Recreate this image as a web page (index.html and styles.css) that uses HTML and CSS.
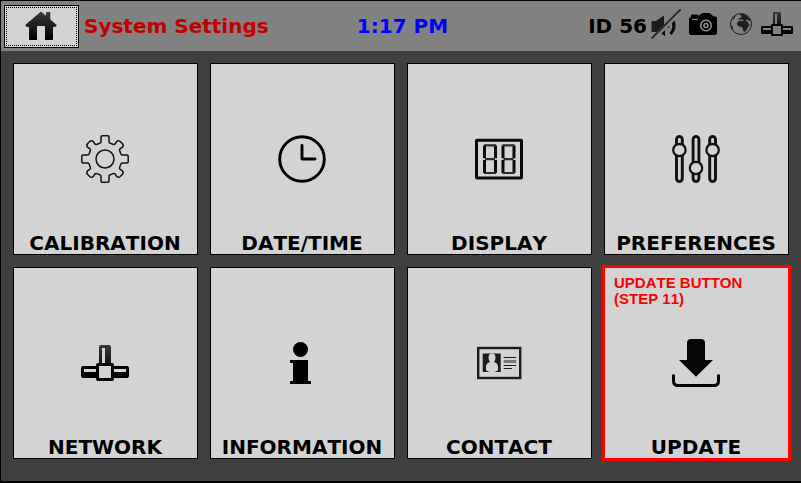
FILE: index.html
```html
<!DOCTYPE html>
<html lang="en">
<head>
    <meta charset="UTF-8">
    <meta name="viewport" content="width=device-width, initial-scale=1.0">
    <title>System Settings</title>
    <link rel="stylesheet" href="styles.css">
</head>
<body>
    <header class="topbar">
        <div class="topbar-left">
            <button type="button" class="home-button" aria-label="Home">
                <svg width="32" height="30" viewBox="0 0 32 30">
                    <defs>
                        <linearGradient id="home-fill" x1="0" y1="0" x2="0" y2="1">
                            <stop offset="0" stop-color="#3a3a3a"/>
                            <stop offset="1" stop-color="#000"/>
                        </linearGradient>
                    </defs>
                    <path fill="url(#home-fill)" d="M16 0.5L21 4.8V2Q21 1 22 1H24.3Q25.3 1 25.3 2V8.5L31.5 13.8Q32 14.5 31 15.2L30 16Q29.3 16.3 28 15.7V28Q28 29 27 29H20V15.5Q20 15 19.5 15H12.5Q12 15 12 15.5V29H5Q4 29 4 28V15.7Q2.7 16.3 2 16L1 15.2Q0 14.5 0.5 13.8Z"/>
                </svg>
            </button>
            <h1 class="page-title">System Settings</h1>
        </div>
        <time class="clock">1:17 PM</time>
        <div class="status">
            <span class="device-id">ID 56</span>
            <div class="status-icons">
                <svg width="30" height="30" viewBox="0 0 30 30">
                    <path fill="#1c1c1c" d="M0.5 12.5Q0.5 12 1 12H5L13 6.5V16L5.5 23H1Q0.5 23 0.5 22.5Z"/>
                    <path fill="#050505" d="M9 23.5L14 18.5V27Z"/>
                    <path fill="none" stroke="#1c1c1c" stroke-width="2" d="M17 19Q18 17 17.5 15"/>
                    <path fill="none" stroke="#0c0c0c" stroke-width="3.2" d="M19.5 25Q25 19 21.8 11.5"/>
                    <path stroke="#818181" stroke-width="3" d="M2 31L31 2"/>
                    <path stroke="#222" stroke-width="1.8" d="M0.5 29.5L29.5 0.5"/>
                </svg>
                <svg class="camera" width="28" height="22" viewBox="0 0 28 22">
                    <path fill="#000" d="M2 4V2.5Q2 1.5 3 1.5H8.5Q9.5 1.5 9.5 2.5V3L12 1Q13 0 14 0H20Q21 0 22 1L24.5 3.5H26Q28 3.5 28 5.5V20Q28 22 26 22H2Q0 22 0 20V6Q0 4.5 2 4Z"/>
                    <circle cx="17" cy="12.5" r="5.3" fill="none" stroke="#909090" stroke-width="1.5"/>
                    <circle cx="17" cy="12.5" r="2" fill="none" stroke="#909090" stroke-width="1.5"/>
                    <path stroke="#818181" stroke-width="1.3" d="M3 6.5H9"/>
                </svg>
                <svg width="24" height="24" viewBox="0 0 24 24">
                    <circle cx="12" cy="12" r="10.5" fill="none" stroke="#1c1c1c" stroke-width="1"/>
                    <path fill="#1c1c1c" d="M11 2.5L14 1.8L18 4L21.5 8L20.5 9L18.5 7.5L16.5 8.5L19 10L19.5 12.5H21L18.5 16L17.5 18L15.5 20L14 18.5L13.5 15.5L11 14.5L9 14L8 12L9 9.5L11.5 8.7L14 9.2L14.5 8L12.5 7.2L10.5 8L9.5 7L12 5.5L13 3.5L11.5 4Z"/>
                    <path fill="#1c1c1c" d="M3 7L6 3.5L6.5 4.5L4 7.5ZM1.8 13L3.5 14L4 16.5L3 17Z"/>
                </svg>
                <svg width="32" height="32" viewBox="0 0 48 48">
                    <use href="#network-shape"/>
                </svg>
            </div>
        </div>
    </header>

    <main class="tiles">
        <button type="button" class="tile">
            <svg class="tile-icon" viewBox="0 0 48 48" fill="none" stroke="#111" stroke-width="1.5">
                <defs>
                    <path id="gear-quarter" d="M24 0.8H26.8Q28 0.8 28 2V6.5Q28 8 29.3 8.3Q31 8.7 32 9.3Q33.3 10 34.3 8.8L35.5 6.8Q37.3 5 39.3 6.5L41.5 8.7Q43 10.7 41.2 12.5L39.2 13.7Q38 14.7 38.7 16Q39.3 17 39.7 18.7Q40 20 41.5 20H46Q47.2 20 47.2 21.2V24"/>
                </defs>
                <use href="#gear-quarter"/>
                <use href="#gear-quarter" transform="rotate(90 24 24)"/>
                <use href="#gear-quarter" transform="rotate(180 24 24)"/>
                <use href="#gear-quarter" transform="rotate(270 24 24)"/>
                <circle cx="24" cy="24" r="9"/>
            </svg>
            <span class="tile-label">CALIBRATION</span>
        </button>

        <button type="button" class="tile">
            <svg class="tile-icon" viewBox="0 0 48 48" fill="none" stroke="#000" stroke-width="2.9">
                <circle cx="24" cy="24" r="22.3"/>
                <path stroke-linecap="round" stroke-linejoin="round" d="M24 10.5V24H37"/>
            </svg>
            <span class="tile-label">DATE/TIME</span>
        </button>

        <button type="button" class="tile">
            <svg class="tile-icon" viewBox="0 0 48 48" fill="none" stroke="#0a0a0a">
                <rect x="1.5" y="5.3" width="45" height="37.6" rx="0.5" stroke-width="3"/>
                <g id="digit">
                    <path stroke-width="3" d="M9.5 10.5V23.3M9.5 25V38M20.5 10.5V23.3M20.5 25V38"/>
                    <path stroke="#2a2a2a" stroke-width="2.2" d="M9 10.3H21M10 24.2H20M9 38H21"/>
                </g>
                <use href="#digit" x="18.5"/>
            </svg>
            <span class="tile-label">DISPLAY</span>
        </button>

        <button type="button" class="tile">
            <svg class="tile-icon" viewBox="0 0 48 48" fill="none" stroke="#111" stroke-width="2.9">
                <rect x="4.5" y="1.5" width="5.8" height="45" rx="2.9"/>
                <rect x="21.1" y="1.5" width="5.8" height="45" rx="2.9"/>
                <rect x="37.7" y="1.5" width="5.8" height="45" rx="2.9"/>
                <g fill="#d3d3d3" stroke-width="2.2">
                    <circle cx="7.4" cy="15" r="6.2"/>
                    <circle cx="24" cy="33" r="6.2"/>
                    <circle cx="40.6" cy="15" r="6.2"/>
                </g>
                <path stroke-width="2" d="M4 9.3H10.8M37.2 9.3H44M20.6 38.9H27.4"/>
            </svg>
            <span class="tile-label">PREFERENCES</span>
        </button>

        <button type="button" class="tile">
            <svg class="tile-icon" viewBox="0 0 48 48">
                <defs>
                    <linearGradient id="stem-fill" x1="0" y1="0" x2="0" y2="1">
                        <stop offset="0" stop-color="#3a3a3a"/>
                        <stop offset="1" stop-color="#111"/>
                    </linearGradient>
                    <g id="network-shape" fill-rule="evenodd">
                        <path fill="url(#stem-fill)" d="M20 6H28Q30 6 30 8V25H18V8Q18 6 20 6ZM21 9V24H24V9Z"/>
                        <path d="M2 27H16V39H2Q0 39 0 37V29Q0 27 2 27ZM3 30V33H15V30Z"/>
                        <path d="M32 27H46Q48 27 48 29V37Q48 39 46 39H32ZM33 30V33H45V30Z"/>
                        <path d="M17 24H31Q33 24 33 26V40Q33 42 31 42H17Q15 42 15 40V26Q15 24 17 24ZM18 27V39H30V27Z"/>
                    </g>
                </defs>
                <use href="#network-shape"/>
            </svg>
            <span class="tile-label">NETWORK</span>
        </button>

        <button type="button" class="tile">
            <svg class="tile-icon" viewBox="0 0 48 48">
                <circle cx="22.5" cy="10.5" r="7.5"/>
                <path d="M12 21H30V42H33V45H12V42H15V24H12Z"/>
            </svg>
            <span class="tile-label">INFORMATION</span>
        </button>

        <button type="button" class="tile">
            <svg class="tile-icon" viewBox="0 0 48 48">
                <rect x="3.2" y="9" width="42" height="30" fill="none" stroke="#1c1c1c" stroke-width="2.4"/>
                <rect x="7.7" y="14.5" width="18" height="18.5" fill="#1c1c1c"/>
                <path fill="#d3d3d3" d="M17 14.5Q20.5 14.5 20.5 18.5Q20.5 21.5 19 23Q23 24 23 28V31Q21.5 33 17 33Q12.5 33 11 31V28Q11 24 15 23Q13.5 21.5 13.5 18.5Q13.5 14.5 17 14.5Z"/>
                <path stroke="#777" stroke-width="3" d="M28.7 22.5H41.3"/>
                <path stroke="#1c1c1c" stroke-width="1" d="M28.7 18.5H41.3M28.7 26.5H41.3M28.7 29.5H37"/>
            </svg>
            <span class="tile-label">CONTACT</span>
        </button>

        <button type="button" class="tile tile-marked">
            <svg class="tile-icon" viewBox="0 0 48 48">
                <path fill="#050505" d="M19 0H29Q33 0 33 4V21H41L24 37.8L7 21H15V4Q15 0 19 0Z"/>
                <path fill="none" stroke="#050505" stroke-width="3" d="M1.5 35.5V42Q1.5 46.5 6 46.5H42Q46.5 46.5 46.5 42V35.5"/>
            </svg>
            <span class="tile-label">UPDATE</span>
            <span class="tile-note">UPDATE BUTTON<br>(STEP 11)</span>
        </button>
    </main>
</body>
</html>
```

FILE: styles.css
```css
* {
    box-sizing: border-box;
}

body {
    display: flex;
    flex-direction: column;
    min-height: 100vh;
    margin: 0;
    border: solid #000;
    border-width: 1px 0 2px 1px;
    background-color: #404040;
    color: #000;
    font-family: Verdana, "DejaVu Sans", sans-serif;
    font-size: 20px;
    font-weight: bold;
    font-kerning: none;
    line-height: 24px;
}

/* Top bar */
.topbar {
    display: grid;
    grid-template-columns: 1fr auto 1fr;
    align-items: center;
    height: 50px;
    padding: 0 8px 0 3px;
    background-color: #818181;
}

.topbar-left {
    display: flex;
    align-items: center;
    gap: 5px;
}

.home-button {
    display: flex;
    align-items: center;
    justify-content: center;
    width: 75px;
    height: 43px;
    padding: 0 2px 0 0;
    border: 1px solid #000;
    background-color: #d3d3d3;
    outline: 1px dotted #000;
    outline-offset: -3px;
}

.page-title {
    margin: 0;
    color: #c00000;
    font-size: 20px;
    white-space: nowrap;
}

.clock {
    margin-left: 8px;
    color: #0000ff;
}

.status {
    display: flex;
    align-items: center;
    justify-content: flex-end;
    gap: 4px;
    white-space: nowrap;
}

.status-icons {
    display: flex;
    align-items: center;
    gap: 8px;
    padding-bottom: 4px;
}

.camera {
    margin-right: 4px;
}

/* Settings tiles */
.tiles {
    display: grid;
    flex: 1;
    grid-template-columns: repeat(4, 1fr);
    grid-auto-rows: 1fr;
    gap: 12px;
    padding: 12px 12px 22px;
}

.tile {
    position: relative;
    display: grid;
    min-width: 0;
    padding: 0 1px 0 0;
    border: 1px solid #000;
    background-color: #d3d3d3;
    color: #000;
    font: inherit;
    font-kerning: none;
}

.tile-icon,
.tile-label {
    grid-area: 1 / 1;
}

.tile-icon {
    place-self: center;
    width: 48px;
    height: 48px;
}

.tile-label {
    place-self: end center;
    line-height: 22px;
}

/* Highlighted tile */
.tile-marked::after {
    content: "";
    position: absolute;
    inset: -3px;
    border: 3px solid #ff0000;
}

.tile-note {
    position: absolute;
    top: 7px;
    left: 9px;
    color: #ff0000;
    font-family: Arial, "Liberation Sans", sans-serif;
    font-size: 15px;
    line-height: 16px;
    text-align: left;
}
```
